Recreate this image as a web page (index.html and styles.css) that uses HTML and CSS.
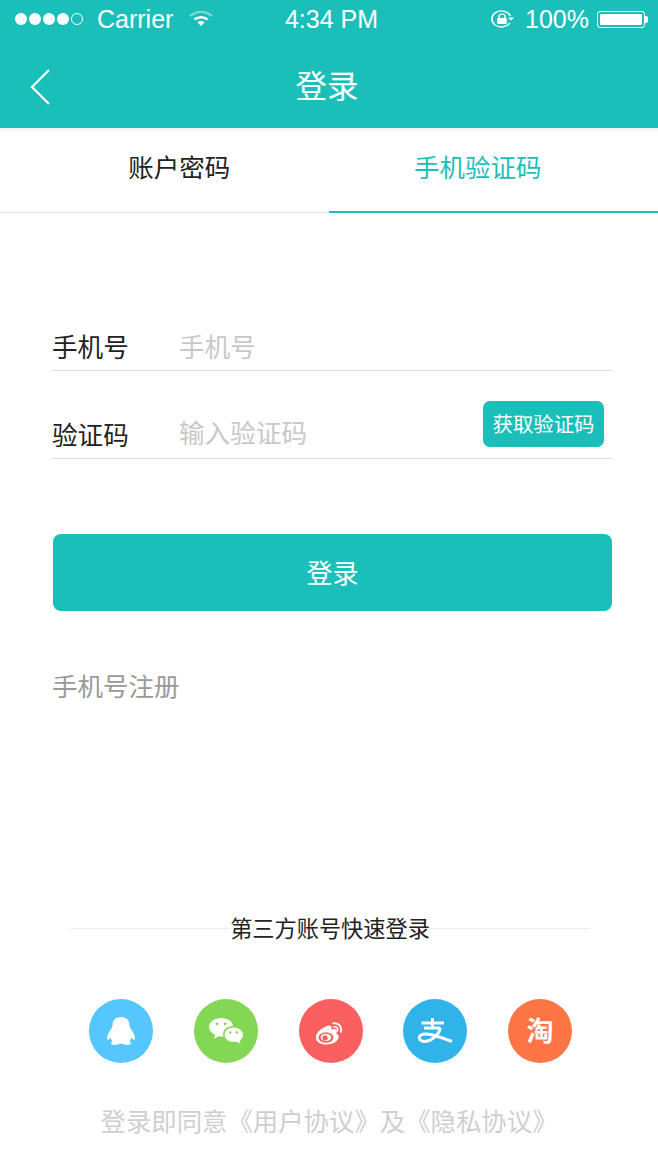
FILE: index.html
```html
<!DOCTYPE html>
<html lang="zh-CN">
<head>
  <meta charset="UTF-8">
  <title>登录</title>
  <link rel="stylesheet" href="styles.css">
</head>
<body>

  <div class="top-bar">
    <div class="status-bar">
      <div class="status-left">
        <span class="signal">
          <i></i><i></i><i></i><i></i><i class="empty"></i>
        </span>
        <span class="carrier">Carrier</span>
        <svg class="wifi" width="24" height="16" viewBox="0 0 22 16" preserveAspectRatio="none">
          <path d="M1 5 C7 -0.5 15 -0.5 21 5" fill="none" stroke="#7fd8d3" stroke-width="2.4"/>
          <path d="M5 8.5 C8.5 5.5 13.5 5.5 17 8.5" fill="none" stroke="#fff" stroke-width="2.4"/>
          <path d="M7.8 11.2 C9.8 9.6 12.2 9.6 14.2 11.2 L11 15 Z" fill="#fff"/>
        </svg>
      </div>
      <div class="status-time">4:34 PM</div>
      <div class="status-right">
        <svg class="lock" width="24" height="20" viewBox="0 0 20 20" preserveAspectRatio="none">
          <path d="M16.5 14 A8 8 0 1 1 17 7" fill="none" stroke="#fff" stroke-width="1.3"/>
          <path d="M15 8.5 L20 8.5 L17.5 11.5 Z" fill="#fff"/>
          <rect x="6" y="9" width="8" height="6" rx="1" fill="#fff"/>
          <path d="M7.5 9 V7.5 A2.5 2.5 0 0 1 12.5 7.5 V9" fill="none" stroke="#fff" stroke-width="1.2"/>
        </svg>
        <span class="battery-text">100%</span>
        <span class="battery"><b></b></span>
      </div>
    </div>
    <div class="nav-bar">
      <svg class="back" width="22" height="38" viewBox="0 0 22 38">
        <path d="M20 2 L3 19 L20 36" fill="none" stroke="#fff" stroke-width="2.2"/>
      </svg>
      <h1>登录</h1>
    </div>
  </div>

  <div class="tabs">
    <div class="tab">账户密码</div>
    <div class="tab active">手机验证码</div>
  </div>

  <form class="login-form">
    <div class="field">
      <label>手机号</label>
      <span class="hint">手机号</span>
    </div>
    <div class="field code-field">
      <label>验证码</label>
      <span class="hint">输入验证码</span>
      <button type="button" class="code-btn">获取验证码</button>
    </div>
    <button type="button" class="login-btn">登录</button>
    <div class="register">手机号注册</div>
  </form>

  <div class="third">
    <div class="third-title"><span>第三方账号快速登录</span></div>
    <div class="third-icons">
      <span class="circle qq">
        <svg width="30" height="28" viewBox="0 0 30 28">
          <path d="M15 0 C20.5 0 23.5 3.5 23.5 8.5 C23.5 10.5 25 12 26.5 14.5 C28.5 17.5 29.5 20.5 28.5 22.5 C27.5 23 26.5 22 25.5 20.5 C25 22 24.5 23 23.5 24 C25 25 25.5 26.5 24 27.5 C21.5 28.2 18.5 28 16.5 26.8 L13.5 26.8 C11.5 28 8.5 28.2 6 27.5 C4.5 26.5 5 25 6.5 24 C5.5 23 5 22 4.5 20.5 C3.5 22 2.5 23 1.5 22.5 C0.5 20.5 1.5 17.5 3.5 14.5 C5 12 6.5 10.5 6.5 8.5 C6.5 3.5 9.5 0 15 0 Z" fill="#fff"/>
        </svg>
      </span>
      <span class="circle wechat">
        <svg width="36" height="29" viewBox="0 0 38 32" preserveAspectRatio="none">
          <path d="M14 1 C21 1 26 5 26.5 10 C20.5 10 16 14 16 19 C16 20 16.2 20.8 16.5 21.5 C15 21.8 13 21.7 11.5 21.3 L6.5 24 L7.5 19.5 C3.5 17.5 1 14.5 1 11 C1 5.5 7 1 14 1 Z" fill="#fff"/>
          <path d="M27 11.5 C32.5 11.5 37 15 37 19.5 C37 22 35.5 24.2 33.5 25.8 L34.5 29.5 L30.5 27.2 C29.5 27.4 28 27.6 27 27.5 C21.5 27.5 17.5 24 17.5 19.5 C17.5 15 21.5 11.5 27 11.5 Z" fill="#fff"/>
          <circle cx="9.5" cy="7.5" r="1.5" fill="#83d754"/>
          <circle cx="18" cy="7.5" r="1.5" fill="#83d754"/>
          <circle cx="23.5" cy="17" r="1.3" fill="#83d754"/>
          <circle cx="30.5" cy="17" r="1.3" fill="#83d754"/>
        </svg>
      </span>
      <span class="circle weibo">
        <svg width="28" height="23" viewBox="0 0 32 26" preserveAspectRatio="none">
          <path d="M12 5.5 C16 3 19 3.5 19 6.5 C19 8 18.5 8.5 19.5 8.5 C23 7 25.5 8.5 25 11 C24.8 12 24 12.5 24.5 13 C26 14 27 15 27 17 C27 21.5 20.5 25.5 13 25.5 C6.5 25.5 1 22.5 1 17.5 C1 14 4 9 12 5.5 Z" fill="#fff"/>
          <ellipse cx="12.5" cy="17.5" rx="8.5" ry="6" fill="#fa6060"/>
          <ellipse cx="12.5" cy="17.5" rx="6" ry="4.2" fill="#fff"/>
          <circle cx="11.5" cy="18" r="3" fill="#fa6060"/>
          <path d="M21 1.5 C27 0.5 31 5.5 29.5 11" fill="none" stroke="#fff" stroke-width="2.2" stroke-linecap="round"/>
          <path d="M21.5 5.5 C24.5 5 26.5 7.5 25.8 10" fill="none" stroke="#fff" stroke-width="1.8" stroke-linecap="round"/>
        </svg>
      </span>
      <span class="circle alipay">
        <svg width="36" height="26" viewBox="0 0 36 26">
          <path d="M4.5 5 H27 M15.5 0 V10 M7 10 H23.5 M23.5 10 C21 18 13 24 7 23.5 C2 23 1 19 4 17 C9 14 20 18 35 23.5" fill="none" stroke="#fff" stroke-width="3"/>
        </svg>
      </span>
      <span class="circle taobao">淘</span>
    </div>
  </div>

  <div class="agreement">登录即同意《用户协议》及《隐私协议》</div>

</body>
</html>
```

FILE: styles.css
```css
* {
  box-sizing: border-box;
}
body {
  margin: 0;
  height: 1170px;
  overflow: hidden;
  background: #fff;
  font-family: "Noto Sans CJK SC", "Liberation Sans", sans-serif;
  color: #222;
}

/* top */
.top-bar {
  height: 128px;
  background: #1bbfb9;
  color: #fff;
}
.status-bar {
  height: 40px;
  display: grid;
  grid-template-columns: 1fr auto 1fr;
  align-items: center;
  padding: 0 10px 2px 15px;
  font-family: "Liberation Sans", sans-serif;
  font-size: 25px;
}
.status-left {
  display: flex;
  align-items: center;
}
.signal {
  display: flex;
  gap: 2px;
  margin-right: 14px;
}
.signal i {
  width: 12px;
  height: 12px;
  border-radius: 50%;
  background: #fff;
}
.signal i.empty {
  background: none;
  border: 1px solid #fff;
}
.wifi {
  margin-left: 16px;
}
.status-right {
  display: flex;
  align-items: center;
  justify-content: flex-end;
}
.lock {
  margin-right: 11px;
}
.battery {
  width: 48px;
  height: 17px;
  margin-left: 8px;
  margin-right: 3px;
  padding: 2px;
  border: 1px solid #fff;
  border-radius: 3px;
  position: relative;
}
.battery:after {
  content: "";
  position: absolute;
  right: -4px;
  top: 4px;
  width: 3px;
  height: 7px;
  background: #fff;
  border-radius: 0 2px 2px 0;
}
.battery b {
  display: block;
  height: 100%;
  background: #fff;
  border-radius: 1px;
}
.nav-bar {
  height: 88px;
  display: flex;
  align-items: center;
  justify-content: center;
  position: relative;
}
.nav-bar h1 {
  margin: 0 4px 0 0;
  font-size: 31.5px;
  font-weight: 400;
  line-height: 44px;
}
.back {
  position: absolute;
  left: 29px;
  top: 28px;
}

/* tabs */
.tabs {
  display: flex;
  height: 85px;
  border-top: 3px solid #f5f5f5;
  border-bottom: 1px solid #e2e2e2;
  font-size: 25.5px;
}
.tab {
  flex: 1;
  display: flex;
  align-items: center;
  justify-content: center;
  margin-bottom: -1px;
  padding: 0 0 13px 30px;
}
.tab.active {
  color: #1bbfb9;
  border-bottom: 2px solid #1bbfb9;
  padding: 0 31px 11px 0;
}

/* form */
.login-form {
  padding: 102px 46px 0 52px;
}
.field {
  display: flex;
  align-items: center;
  height: 56px;
  padding-top: 6px;
  border-bottom: 1px solid #dedede;
  font-size: 25.6px;
  position: relative;
}
.field label {
  width: 127px;
}
.hint {
  color: #c8c8c8;
}
.code-field {
  height: 88px;
  align-items: flex-end;
  padding-top: 0;
  padding-bottom: 6px;
}
.code-field .hint {
  margin-bottom: 2px;
}
.code-btn {
  position: absolute;
  right: 8px;
  top: 30px;
  width: 121px;
  height: 46px;
  padding: 0 0 2px;
  border: 0;
  border-radius: 7px;
  background: #1bbfb9;
  color: #fff;
  font-family: inherit;
  font-size: 20.4px;
}
.login-btn {
  display: block;
  width: calc(100% - 1px);
  height: 77px;
  margin: 75px 0 0 1px;
  padding: 0 0 2px;
  border: 0;
  border-radius: 8px;
  background: #1bbfb9;
  color: #fff;
  font-family: inherit;
  font-size: 26px;
}
.register {
  margin-top: 56px;
  font-size: 25.5px;
  line-height: 36px;
  color: #999;
}

/* third party */
.third {
  margin-top: 211px;
}
.third-title {
  margin: 0 68px 0 70px;
  height: 30px;
  padding-bottom: 4px;
  display: flex;
  justify-content: center;
  align-items: center;
  font-size: 22.2px;
  position: relative;
}
.third-title:before {
  content: "";
  position: absolute;
  left: 0;
  right: 0;
  top: 14px;
  border-top: 1px solid #ececec;
}
.third-title span {
  position: relative;
  background: #fff;
  line-height: 28px;
}
.third-icons {
  display: flex;
  justify-content: space-between;
  padding: 0 86px 0 89px;
  margin-top: 55px;
}
.circle {
  width: 64px;
  height: 64px;
  border-radius: 50%;
  display: flex;
  align-items: center;
  justify-content: center;
}
.qq {
  background: #56c6fe;
}
.wechat {
  background: #83d754;
}
.weibo {
  background: #fa6060;
  padding: 5px 3px 0 0;
}
.alipay {
  background: #2fb3e8;
}
.taobao {
  background: #fd7544;
  color: #fff;
  font-size: 27px;
  font-weight: 700;
  padding-bottom: 3px;
}
.agreement {
  margin-top: 39px;
  text-align: center;
  font-size: 25.4px;
  line-height: 36px;
  color: #cfcfcf;
}
```
